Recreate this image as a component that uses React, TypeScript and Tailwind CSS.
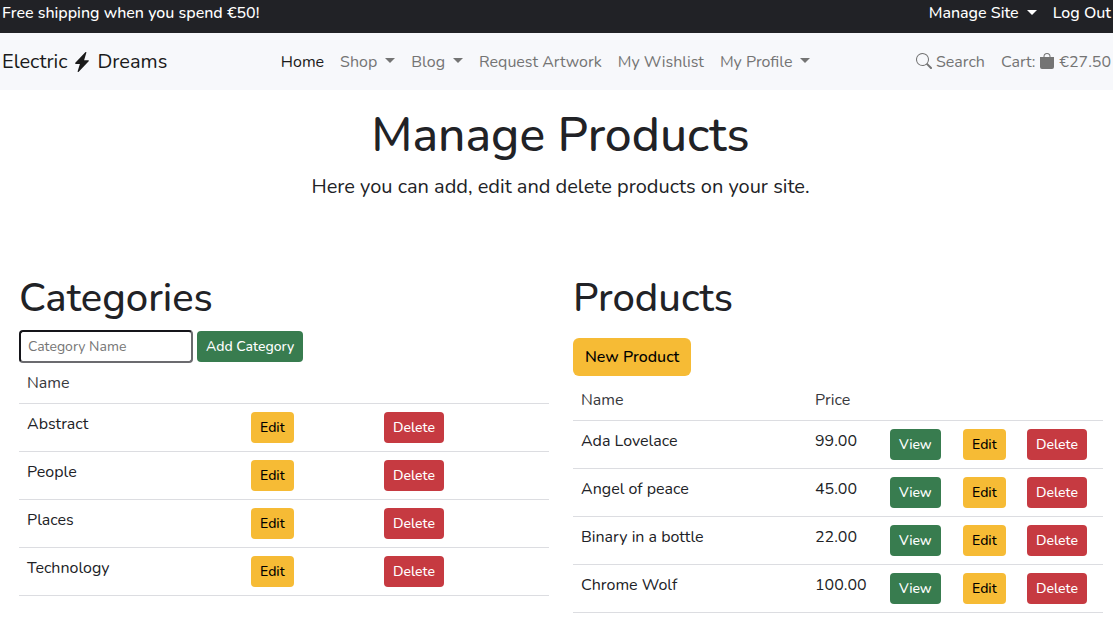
import type { ReactNode } from 'react';
import { BsBagFill, BsLightningChargeFill, BsSearch } from 'react-icons/bs';

const categories = ['Abstract', 'People', 'Places', 'Technology'];

const products = [
  { name: 'Ada Lovelace', price: '99.00' },
  { name: 'Angel of peace', price: '45.00' },
  { name: 'Binary in a bottle', price: '22.00' },
  { name: 'Chrome Wolf', price: '100.00' },
];

const navItems = [
  { label: 'Home', active: true },
  { label: 'Shop', menu: true },
  { label: 'Blog', menu: true },
  { label: 'Request Artwork' },
  { label: 'My Wishlist' },
  { label: 'My Profile', menu: true },
];

const tones = {
  green: 'bg-[#387c4f] text-white',
  yellow: 'bg-[#f6bb35] text-black',
  red: 'bg-[#c63a41] text-white',
};

function Caret() {
  return (
    <svg className="mb-[3px] ml-2 h-[5px] w-[10px]" viewBox="0 0 10 5" fill="currentColor" aria-hidden="true">
      <path d="M0 0h10L5 5z" />
    </svg>
  );
}

function SmallButton({ tone, children }: { tone: keyof typeof tones; children: ReactNode }) {
  return (
    <button
      type="button"
      className={`block h-[31px] rounded px-[9px] text-sm font-medium whitespace-nowrap ${tones[tone]}`}
    >
      {children}
    </button>
  );
}

function TopBar() {
  return (
    <div className="flex justify-between bg-[#212226] px-[2px] pt-px pb-[7px] font-medium text-white">
      <p className="leading-[25px]">Free shipping when you spend €50!</p>
      <div className="flex gap-4">
        <button type="button" className="flex items-center leading-[25px]">
          Manage Site
          <Caret />
        </button>
        <a href="#logout" className="leading-[25px]">
          Log Out
        </a>
      </div>
    </div>
  );
}

function NavBar() {
  return (
    <nav className="flex min-h-[57px] flex-wrap items-center justify-between bg-[#f7f8fb] px-[2px] text-[#747474]">
      <a href="#home" className="flex items-center gap-[5px] text-xl text-[#1a1a1a]">
        Electric
        <BsLightningChargeFill className="size-5" aria-hidden="true" />
        Dreams
      </a>
      <ul className="flex flex-wrap gap-x-4 pl-2">
        {navItems.map((item) => (
          <li key={item.label}>
            {item.menu ? (
              <button type="button" className="flex items-center">
                {item.label}
                <Caret />
              </button>
            ) : (
              <a href="#page" className={item.active ? 'text-[#1a1a1a]' : ''}>
                {item.label}
              </a>
            )}
          </li>
        ))}
      </ul>
      <div className="flex gap-4">
        <a href="#search" className="flex items-center gap-1">
          <BsSearch className="mb-[2px] size-4" aria-hidden="true" />
          Search
        </a>
        <a href="#cart" className="flex items-center gap-1">
          Cart:
          <BsBagFill className="mb-[2px] size-4" aria-hidden="true" />
          €27.50
        </a>
      </div>
    </nav>
  );
}

function Categories() {
  return (
    <section>
      <h2 className="text-[40px] leading-[48px] font-medium">Categories</h2>
      <form className="mt-2 flex gap-1" onSubmit={(e) => e.preventDefault()}>
        <input
          type="text"
          aria-label="Category Name"
          placeholder="Category Name"
          className="h-[33px] w-[174px] rounded border-2 border-t-[#15151a] border-r-[#6b6b6f] border-b-[#6b6b6f] border-l-[#15151a] px-[7px] text-sm placeholder:text-[#757575]"
        />
        <div className="pt-px">
          <SmallButton tone="green">Add Category</SmallButton>
        </div>
      </form>
      <table className="w-full table-fixed">
        <thead>
          <tr className="border-b border-[#dcdde1]">
            <th className="p-2 text-left font-normal text-[#37383c]">Name</th>
            <td className="w-[133px]" />
            <td className="w-[173px]" />
          </tr>
        </thead>
        <tbody>
          {categories.map((name) => (
            <tr key={name} className="border-b border-[#dcdde1] align-top">
              <td className="p-2">{name}</td>
              <td className="p-2">
                <SmallButton tone="yellow">Edit</SmallButton>
              </td>
              <td className="p-2">
                <SmallButton tone="red">Delete</SmallButton>
              </td>
            </tr>
          ))}
        </tbody>
      </table>
    </section>
  );
}

function Products() {
  return (
    <section>
      <h2 className="text-[40px] leading-[48px] font-medium">Products</h2>
      <button
        type="button"
        className="mt-4 mb-1 block h-[38px] rounded-md bg-[#f6bb35] px-3 font-medium text-black"
      >
        New Product
      </button>
      <table className="w-full table-fixed">
        <thead>
          <tr className="border-b border-[#dcdde1] text-left text-[#37383c]">
            <th className="p-2 font-normal">Name</th>
            <th className="w-[75px] p-2 font-normal">Price</th>
            <td className="w-[73px]" />
            <td className="w-[64px]" />
            <td className="w-[84px]" />
          </tr>
        </thead>
        <tbody>
          {products.map((product) => (
            <tr key={product.name} className="border-b border-[#dcdde1] align-top">
              <td className="p-2">{product.name}</td>
              <td className="p-2">{product.price}</td>
              <td className="p-2">
                <SmallButton tone="green">View</SmallButton>
              </td>
              <td className="p-2">
                <SmallButton tone="yellow">Edit</SmallButton>
              </td>
              <td className="p-2">
                <SmallButton tone="red">Delete</SmallButton>
              </td>
            </tr>
          ))}
        </tbody>
      </table>
    </section>
  );
}

export default function App() {
  return (
    <div className="min-h-screen bg-white font-['Nunito','Open_Sans',sans-serif] text-base text-[#212226]">
      <TopBar />
      <NavBar />
      <header className="pt-4 pl-2 text-center">
        <h1 className="text-5xl leading-[58px] font-medium">Manage Products</h1>
        <p className="mt-2 text-xl leading-[30px]">Here you can add, edit and delete products on your site.</p>
      </header>
      <main className="grid gap-6 pt-[72px] pr-[10px] pb-2 pl-[19px] md:grid-cols-2">
        <Categories />
        <Products />
      </main>
    </div>
  );
}
